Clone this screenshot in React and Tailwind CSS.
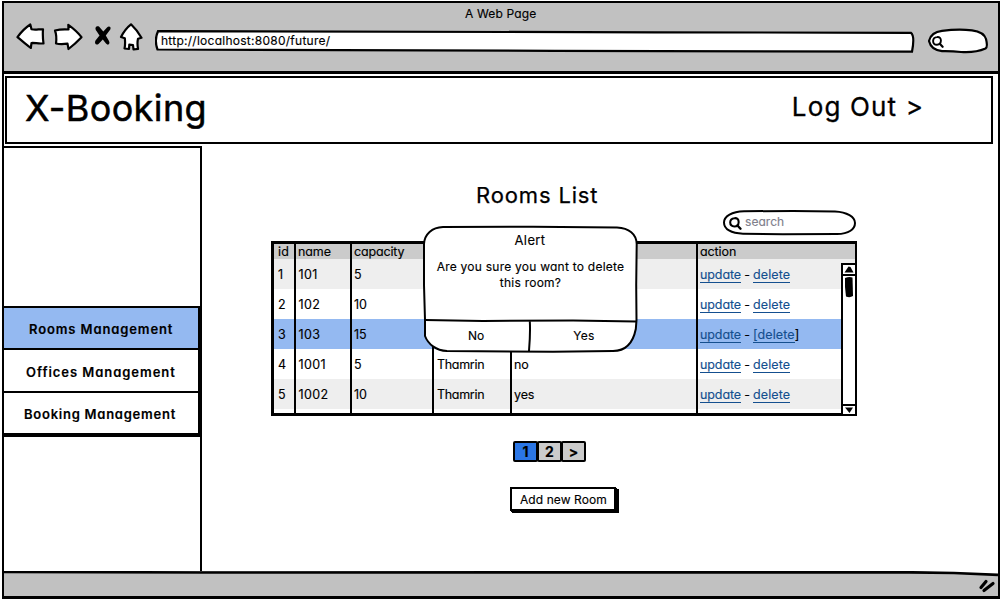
const ROOMS = [
  { id: "1", name: "101", capacity: "5", office: "", used: "" },
  { id: "2", name: "102", capacity: "10", office: "", used: "" },
  { id: "3", name: "103", capacity: "15", office: "", used: "", selected: true },
  { id: "4", name: "1001", capacity: "5", office: "Thamrin", used: "no" },
  { id: "5", name: "1002", capacity: "10", office: "Thamrin", used: "yes" },
];

const COLUMNS = "grid grid-cols-[21px_56px_82px_78px_186px_1fr]";

function Magnifier({ className }) {
  return (
    <svg className={className} viewBox="0 0 12 12" fill="none" stroke="#000" strokeWidth="1.900" strokeLinecap="round">
      <path d="M5 1.100C7.600.800 9 2.400 8.900 4.800 8.800 7.200 7.300 8.700 5 8.700 2.600 8.700 1.100 7.200 1.100 4.900 1.200 2.700 2.600 1.300 5 1.100Z" />
      <path d="M7.800 7.800 10.600 10.800" strokeWidth="2.200" />
    </svg>
  );
}

function Toolbar() {
  return (
    <div className="h-[71px] shrink-0 border-b-[3px] border-black bg-[#c1c1c1]">
      <div className="h-[20px] pl-[461px] text-[12px] leading-[21px] tracking-[0.150px]">A Web Page</div>
      <div className="flex pl-[12px]">
        <svg width="30" height="30" viewBox="16 23 30 30" fill="#fff" stroke="#000" strokeWidth="2.200" strokeLinejoin="round">
          <path d="M17.500 37.200C21 32 25 28 30.300 24.500L31.500 29.300C36 30.300 39 29 43 29.300Q42.500 37 43.500 43.300C39 44 35 42.700 31.500 43L30.800 48C26 44 22 41 17.500 37.200Z" />
        </svg>
        <svg className="ml-[7px]" width="32" height="30" viewBox="53 23 32 30" fill="#fff" stroke="#000" strokeWidth="2.200" strokeLinejoin="round">
          <path d="M55 30.500Q61 29 68.500 29.500L68.300 24.800Q77 31 81.500 37.200 75 44 68.500 49L67.500 43.600Q61 44.500 56 43.500 57 36 55 30.500Z" />
        </svg>
        <svg className="ml-[9px]" width="18" height="24" viewBox="94 23 18 24" fill="#000">
          <path d="M99 26.500C95.500 25.500 94.500 28.500 96.500 31L99.500 35.500 95.500 40.500C94 43.500 96 45.500 98.500 44L102.800 39.500 106 43.500C108 46 110.500 44 109 41L105.800 35.500 110.300 29.500C111.500 27 109 25.500 107 27.500L103.300 31.500Z" />
        </svg>
        <svg className="ml-[7px]" width="25" height="30" viewBox="119 23 25 30" fill="#fff" stroke="#000" strokeWidth="2.200" strokeLinejoin="round">
          <path d="M131 24.300Q125 29 121 37L124.800 38.200Q125.500 44 124.500 48.500L129 49 129.300 44.700 133 45 133.500 49.500 138 48.800Q137 43 138 38.800L141.500 37.800Q137 30 131 24.300Z" />
        </svg>
        <div className="relative ml-[11px] mt-[7px] h-[23px] w-[760px] pl-[6px] text-[12px] leading-[21px] tracking-[0.260px]">
          <svg className="absolute inset-0" width="760" height="23" fill="#fff" stroke="#000" strokeWidth="2.200">
            <path d="M3 1.200 Q300 1.300 500 2.300 L756 2.800 Q760 6 757 21.700 L400 20.800 2.500 19.500 Q-1 10 3 1.200Z" />
          </svg>
          <span className="relative">http://localhost:8080/future/</span>
        </div>
        <div className="relative ml-[13px] mt-[5px] h-[26px] w-[62px]">
          <svg className="absolute inset-0" width="62" height="26" fill="#fff" stroke="#000" strokeWidth="2.200">
            <path d="M14 2.800Q30 .8 44 2.300 56 4 58 11 60 19 57.500 20.500 47 25 33 24 24 23 14 23.200 3 22 1 13 3 4 14 2.800Z" />
          </svg>
          <Magnifier className="relative ml-[4px] mt-[8px] size-[12px]" />
        </div>
      </div>
    </div>
  );
}

function Sidebar() {
  return (
    <div className="mt-[2px] h-[425px] w-[198px] shrink-0 border-r-[2px] border-t-[2px] border-black pt-[158px]">
      <div className="w-[198px] border-r-[4px] border-black text-[13px] font-semibold">
        <div className="h-[44px] border-y-[2px] border-black bg-[#94b9f1] pl-[25px] leading-[42px] tracking-[0.880px]">Rooms Management</div>
        <div className="h-[41px] pl-[22px] leading-[44px] tracking-[0.950px]">Offices Management</div>
        <div className="h-[46px] border-b-[4px] border-t-[2px] border-black pl-[20px] leading-[43px] tracking-[0.750px]">Booking Management</div>
      </div>
    </div>
  );
}

function Actions({ selected }) {
  const link = "border-b border-[#144f8f] text-[#144f8f]";
  return (
    <div className="flex items-start pl-[3px] pt-[8px] leading-[15px]">
      <span className={link + " -tracking-[0.1px]"}>update</span>
      <span className="w-[12px] text-center">-</span>
      <span className={link + " tracking-[0.1px]"}>{selected ? "[delete" : "delete"}</span>
      {selected && <span>]</span>}
    </div>
  );
}

function RoomsTable() {
  return (
    <div className="relative -ml-px h-[175px] w-[586px] border-b-[3px] border-l-[3px] border-r-[2px] border-t-[3px] border-black text-[12.500px]">
      <div className={COLUMNS + " h-[15px] bg-[#cbcbcb] leading-[16px]"}>
        <span className="pl-[4px] tracking-[0.300px]">id</span>
        <span className="pl-[3px] -tracking-[0.100px]">name</span>
        <span className="pl-[3px] -tracking-[0.150px]">capacity</span>
        <span />
        <span />
        <span className="pl-[3px] -tracking-[0.100px]">action</span>
      </div>
      {ROOMS.map((room, i) => (
        <div
          key={room.id}
          className={COLUMNS + " h-[30px] leading-[31px] " + (room.selected ? "bg-[#94b9f1]" : i % 2 ? "bg-white" : "bg-[#eeeeee]")}
        >
          <span className="pl-[4px]">{room.id}</span>
          <span className="pl-[3.500px] tracking-[0.350px]">{room.name}</span>
          <span className="pl-[3px]">{room.capacity}</span>
          <span className="pl-[4px] -tracking-[0.300px]">{room.office}</span>
          <span className="pl-[3px] -tracking-[0.150px]">{room.used}</span>
          <Actions selected={room.selected} />
        </div>
      ))}
      <div className={COLUMNS + " absolute inset-y-0 left-px right-0"}>
        <span className="border-r-[2px] border-black" />
        <span className="border-r-[2px] border-black" />
        <span className="border-r-[2px] border-black" />
        <span className="border-r-[2px] border-black" />
        <span className="border-r-[2px] border-black" />
      </div>
      <div className="absolute -bottom-[3px] -right-[2px] flex h-[153px] w-[16px] flex-col items-center border-2 border-black bg-white">
        <svg width="12" height="9" className="shrink-0" viewBox="0 0 12 9"><path d="M1.500 7.500 5.500 1.500 7.500 2 10.500 7.500Z" /></svg>
        <div className="h-[2px] w-full bg-black" />
        <svg width="12" height="22" className="shrink-0" viewBox="0 0 12 22"><path d="M2 2Q6 .5 9.500 1.500L10 20Q7 22 3 20.500Q1.500 10 2 2Z" /></svg>
        <div className="flex-1" />
        <div className="h-[2px] w-full bg-black" />
        <svg width="12" height="8" className="shrink-0" viewBox="0 0 12 8"><path d="M2 1.500H10L6.500 7Z" /></svg>
      </div>
      <Alert />
    </div>
  );
}

function Alert() {
  return (
    <div className="absolute left-[149px] top-[-19px] h-[128px] w-[216px] text-center">
      <svg className="absolute inset-0" width="216" height="128" fill="#fff" stroke="#000" strokeWidth="2">
        <path d="M20 2 L110 1.800 L194 2.500 C206 3 213.500 9 213.700 19 L213.200 60 L213.500 95 L212.800 104 C210 118 202 126 190 126 L130 126.800 L24 126 C13 125.500 5 119 2 111 L2 95 L1 60 L1 19 C1.500 9 9 2.500 20 2Z" />
        <path d="M2 95 L60 96 L150 95.500 L213 96.500 M106.800 96 Q107.500 108 106 126" />
      </svg>
      <div className="relative flex flex-col">
        <div className="pt-[6px] pr-[2px] text-[13px] leading-[18px] tracking-[0.400px]">Alert</div>
        <div className="h-[71px] pr-px pt-[10px] text-[12px] leading-[16px] tracking-[0.240px]">
          Are you sure you want to delete
          <br />
          this room?
        </div>
        <div className="flex text-[12px] leading-[31px]">
          <span className="w-[106px]">No</span>
          <span className="w-[110px] tracking-[0.300px]">Yes</span>
        </div>
      </div>
    </div>
  );
}

function PageButton({ children, active }) {
  return (
    <div
      className={
        "-mr-[1px] h-[21px] w-[25px] rounded-[2px] border-[2.500px] border-black text-center text-[14px] font-bold leading-[17px] " +
        (active ? "bg-[#2b76e5]" : "bg-[#cbcbcb]")
      }
    >
      {children}
    </div>
  );
}

export default function App() {
  return (
    <div className="h-[600px] w-[1001px] overflow-hidden bg-white pl-[2px] pt-[1px] font-['Inter','Liberation_Sans',sans-serif] text-black [-webkit-text-stroke:0.150px] [font-feature-settings:'cv11']">
      <div className="flex h-[598px] w-[998px] flex-col border-2 border-b-[3px] border-black">
        <Toolbar />
        <div className="ml-px mt-[2px] flex h-[68px] w-[988px] shrink-0 justify-between border-2 border-black pl-[18px] pr-[67px]">
          <span className="text-[36px] leading-[61px] tracking-[0.400px] [-webkit-text-stroke:0.500px]">X-Booking</span>
          <span className="text-[26px] leading-[57px] tracking-[1.150px] [-webkit-text-stroke:0.300px]">Log Out &gt;</span>
        </div>
        <div className="flex h-[427px] shrink-0">
          <Sidebar />
          <div className="flex w-[796px] flex-col pl-[70px]">
            <div className="h-[66px] pl-[204px] pt-[35px] text-[22px] leading-[33px] tracking-[0.850px] [-webkit-text-stroke:0.250px]">Rooms List</div>
            <div className="relative ml-[451px] flex h-[31px] w-[134px] pl-[6px] text-[12px] leading-[23px]">
              <svg className="absolute inset-0" width="134" height="27" fill="#fff" stroke="#000" strokeWidth="2">
                <path d="M21 1.200 L70 1 L112 1.500 C124 2 132 7 132 13 C132 19 126 24 114 24 L60 24.300 L20 23.700 C8 23.500 1 19 1 12.500 C1 6 9 1.500 21 1.200Z" />
              </svg>
              <Magnifier className="relative mt-[7px] size-[13px]" />
              <span className="relative ml-[3px] tracking-[0.050px] text-[#80808c]">search</span>
            </div>
            <RoomsTable />
            <div className="ml-[241px] mt-[25px] flex">
              <PageButton active>1</PageButton>
              <PageButton>2</PageButton>
              <PageButton>&gt;</PageButton>
            </div>
            <div className="ml-[238px] mt-[25px] h-[24px] w-[106px] border-2 border-black bg-white pl-[8px] text-[12px] leading-[21px] tracking-[0.080px] shadow-[1px_1px_0_0_#000,2px_2px_0_0_#000,3px_2px_0_0_#000]">
              Add new Room
            </div>
          </div>
        </div>
        <div className="relative flex h-[25px] shrink-0 justify-end bg-[#c1c1c1] pr-[2px] pt-[7px]">
          <svg className="absolute left-0 top-0" width="994" height="6">
            <path d="M905 0H994V3.500L940 1.500Z" fill="#fff" />
            <path d="M0 1 L200 1.500 L905 1.300 L950 2 L994 3.800" fill="none" stroke="#000" strokeWidth="2.700" />
          </svg>
          <svg width="18" height="16" viewBox="0 0 18 16" stroke="#000" strokeWidth="3.200" strokeLinecap="round">
            <path d="M3 9.500 8 3.500M6 12.500 15 5.500" />
          </svg>
        </div>
      </div>
    </div>
  );
}
